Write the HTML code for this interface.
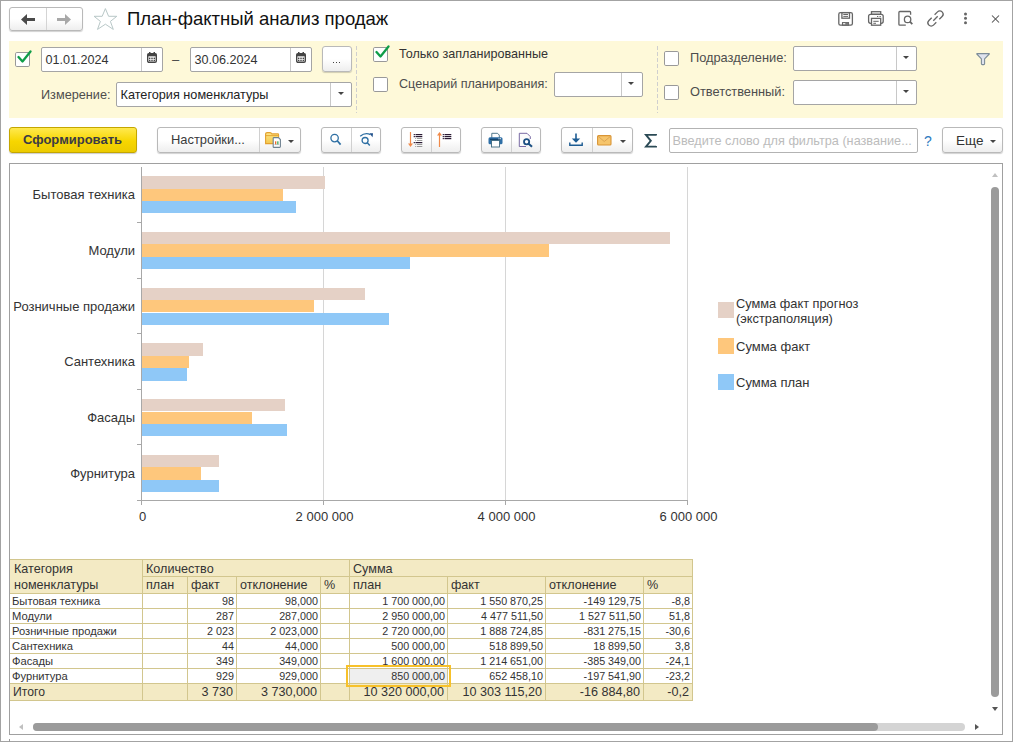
<!DOCTYPE html>
<html><head><meta charset="utf-8">
<style>
*{box-sizing:border-box;margin:0;padding:0}
html,body{width:1013px;height:742px;overflow:hidden;background:#fff}
body{position:relative;font-family:"Liberation Sans",sans-serif;color:#333;font-size:13px}
.a{position:absolute}
.t{position:absolute;white-space:nowrap;line-height:1}
#win{position:absolute;left:0;top:0;width:1013px;height:742px;border:1px solid #a3a3a3;border-width:1px 1px 1px 1px}
.btn{position:absolute;border:1px solid #b9b9b9;border-radius:3px;background:linear-gradient(#fff,#fff 50%,#eeeeee);box-shadow:0 1px 1px rgba(0,0,0,.18)}
.div{position:absolute;top:0;bottom:0;width:1px;background:#d0d0d0}
.inp{position:absolute;border:1px solid #a5a5a5;border-radius:2px;background:#fff}
.cb{position:absolute;width:15px;height:15px;border:1px solid #999;border-radius:1.8px;background:#fff}
.lbl{color:#4d4d4d}
.cal{width:9px;height:9px;border:1px solid #555;border-top-width:3px;background:repeating-linear-gradient(90deg,#555 0 1px,transparent 1px 2px)}
.dd{position:absolute;width:0;height:0;border-left:3px solid transparent;border-right:3px solid transparent;border-top:3px solid #444}
</style></head><body>
<div id="win"></div>

<!-- header -->
<div class="btn" style="left:9px;top:7px;width:74px;height:24px;">
  <div class="div" style="left:36px;background:#d4d4d4"></div>
</div>
<svg class="a" style="left:21px;top:14px" width="14" height="11" viewBox="0 0 14 11"><path d="M0 5.5 L6 0 L6 4 L14 4 L14 7 L6 7 L6 11 Z" fill="#4a4a4a"/></svg>
<svg class="a" style="left:57px;top:14px" width="14" height="11" viewBox="0 0 14 11"><path d="M14 5.5 L8 0 L8 4 L0 4 L0 7 L8 7 L8 11 Z" fill="#a8a8a8"/></svg>
<svg class="a" style="left:88px;top:4px" width="34" height="30" viewBox="0 0 34 30"><path d="M17.4 4.6 L20.6 12.3 L28.8 12.3 L22.4 17.4 L25.3 25.4 L17.4 20.2 L9.5 25.4 L12.4 17.4 L6.1 12.3 L14.2 12.3 Z" fill="none" stroke="#b4c4c4" stroke-width="0.95" stroke-linejoin="miter"/></svg>
<div class="t" style="left:127px;top:10.2px;font-size:18.5px;color:#111">План-фактный анализ продаж</div>

<!-- top-right icons -->
<svg class="a" style="left:830px;top:5px" width="175" height="27" viewBox="830 5 175 27" fill="none" stroke="#666" stroke-width="1.3">
 <rect x="838.8" y="12.6" width="13.6" height="12.6" rx="1.6"/>
 <rect x="841.9" y="12.6" width="7.6" height="5.6"/>
 <line x1="843.3" y1="14.5" x2="848" y2="14.5" stroke-width="1"/><line x1="843.3" y1="16.4" x2="848" y2="16.4" stroke-width="1"/>
 <rect x="842.5" y="22.6" width="6" height="2.6" stroke-width="1.1"/><rect x="845.3" y="22.6" width="3.2" height="2.6" fill="#777" stroke="none"/>
 <rect x="871.5" y="11.7" width="9.2" height="2.6"/>
 <rect x="868.6" y="14.3" width="14.6" height="9" rx="2"/>
 <rect x="871.5" y="18.4" width="9.2" height="6.8" fill="#fff"/>
 <line x1="873.3" y1="21.3" x2="878.7" y2="21.3" stroke-width="1"/><line x1="873.3" y1="23.3" x2="876" y2="23.3" stroke-width="1"/>
 <line x1="877" y1="16.5" x2="878.3" y2="16.5" stroke-width="1"/><line x1="879.5" y1="16.5" x2="880.8" y2="16.5" stroke-width="1"/>
 <path d="M905.8 25.2 H899.8 Q898.9 25.2 898.9 24.3 V12.4 Q898.9 11.5 899.8 11.5 H909.8 Q910.6 11.5 910.6 12.4 V14.8"/>
 <circle cx="907.6" cy="19.4" r="3.2"/><line x1="909.9" y1="21.7" x2="912.3" y2="24.1" stroke-width="1.8"/>
 <path d="M934.6 14.8 L937.5 11.9 A3.2 3.2 0 0 1 942.1 16.5 L939.3 19.3" stroke-width="1.3"/>
 <path d="M931.7 17.7 L928.9 20.5 A3.2 3.2 0 0 0 933.5 25.1 L936.3 22.3" stroke-width="1.3"/>
 <line x1="933.3" y1="20.7" x2="937.7" y2="16.3" stroke-width="1.3"/>
 <circle cx="965.5" cy="13.9" r="1.5" fill="#666" stroke="none"/><circle cx="965.5" cy="18.3" r="1.5" fill="#666" stroke="none"/><circle cx="965.5" cy="22.7" r="1.5" fill="#666" stroke="none"/>
 <line x1="992" y1="15.5" x2="999" y2="22.5" stroke-width="1.05" stroke="#505050"/><line x1="999" y1="15.5" x2="992" y2="22.5" stroke-width="1.05" stroke="#505050"/>
</svg>

<!-- filter panel -->
<div class="a" style="left:9px;top:41px;width:994px;height:77px;background:#fef9d9"></div>


<!-- filter panel content -->
<div class="cb" style="left:15px;top:52px"></div>
<svg class="a" style="left:17px;top:50px" width="15" height="14" viewBox="0 0 15 14"><path d="M1.5 7 L5.5 11.5 L13.5 1.5" fill="none" stroke="#0f9d48" stroke-width="2.3" stroke-linecap="round" stroke-linejoin="round"/></svg>
<div class="inp" style="left:41px;top:47px;width:122px;height:25px"><div class="div" style="left:99px;background:#c8c8c8"></div></div>
<div class="t" style="left:45.5px;top:53.7px;font-size:12.6px;color:#333">01.01.2024</div>
<svg class="a" style="left:147px;top:52px" width="10" height="11" viewBox="0 0 10 11"><rect x="0.7" y="1.7" width="8.6" height="8.6" rx="1.3" fill="none" stroke="#444" stroke-width="1.4"/><rect x="0.7" y="1.7" width="8.6" height="2.6" fill="#444"/><rect x="2" y="0" width="1.5" height="2" fill="#444"/><rect x="6.5" y="0" width="1.5" height="2" fill="#444"/><g fill="#444"><rect x="2" y="5.6" width="1.4" height="1.4"/><rect x="4.3" y="5.6" width="1.4" height="1.4"/><rect x="6.6" y="5.6" width="1.4" height="1.4"/><rect x="2" y="7.7" width="1.4" height="1.4"/><rect x="4.3" y="7.7" width="1.4" height="1.4"/><rect x="6.6" y="7.7" width="1.4" height="1.4"/></g></svg>
<div class="t" style="left:172px;top:53px;font-size:13px;color:#444">–</div>
<div class="inp" style="left:190px;top:47px;width:122px;height:25px"><div class="div" style="left:99px;background:#c8c8c8"></div></div>
<div class="t" style="left:194.5px;top:53.7px;font-size:12.6px;color:#333">30.06.2024</div>
<svg class="a" style="left:296px;top:52px" width="10" height="11" viewBox="0 0 10 11"><rect x="0.7" y="1.7" width="8.6" height="8.6" rx="1.3" fill="none" stroke="#444" stroke-width="1.4"/><rect x="0.7" y="1.7" width="8.6" height="2.6" fill="#444"/><rect x="2" y="0" width="1.5" height="2" fill="#444"/><rect x="6.5" y="0" width="1.5" height="2" fill="#444"/><g fill="#444"><rect x="2" y="5.6" width="1.4" height="1.4"/><rect x="4.3" y="5.6" width="1.4" height="1.4"/><rect x="6.6" y="5.6" width="1.4" height="1.4"/><rect x="2" y="7.7" width="1.4" height="1.4"/><rect x="4.3" y="7.7" width="1.4" height="1.4"/><rect x="6.6" y="7.7" width="1.4" height="1.4"/></g></svg>
<div class="btn" style="left:322px;top:46px;width:30px;height:26px"></div>
<div class="a" style="left:333px;top:62px;width:1.4px;height:1.4px;background:#444"></div><div class="a" style="left:335.8px;top:62px;width:1.4px;height:1.4px;background:#444"></div><div class="a" style="left:338.6px;top:62px;width:1.4px;height:1.4px;background:#444"></div>
<div class="t lbl" style="left:41px;top:88.8px;font-size:12.7px">Измерение:</div>
<div class="inp" style="left:116px;top:82px;width:236px;height:25px"><div class="div" style="left:213px;background:#c8c8c8"></div></div>
<div class="t" style="left:120.5px;top:88.8px;font-size:12.7px;color:#222">Категория номенклатуры</div>
<div class="dd" style="left:338px;top:92px"></div>

<div class="a" style="left:356px;top:46px;width:1px;height:67px;background-image:linear-gradient(#cfcfcf 66%,transparent 66%);background-size:1px 6px"></div>

<div class="cb" style="left:373px;top:47px"></div>
<svg class="a" style="left:375px;top:45px" width="15" height="14" viewBox="0 0 15 14"><path d="M1.5 7 L5.5 11.5 L13.5 1.5" fill="none" stroke="#0f9d48" stroke-width="2.3" stroke-linecap="round" stroke-linejoin="round"/></svg>
<div class="t" style="left:399px;top:48px;font-size:12.6px;color:#333">Только запланированные</div>
<div class="cb" style="left:373px;top:77px"></div>
<div class="t lbl" style="left:399px;top:78px;font-size:12.6px">Сценарий планирования:</div>
<div class="inp" style="left:554px;top:72px;width:89px;height:25px"><div class="div" style="left:66px;background:#c8c8c8"></div></div>
<div class="dd" style="left:628px;top:82px"></div>

<div class="a" style="left:657px;top:46px;width:1px;height:67px;background-image:linear-gradient(#cfcfcf 66%,transparent 66%);background-size:1px 6px"></div>

<div class="cb" style="left:664px;top:51px"></div>
<div class="t lbl" style="left:690px;top:52px;font-size:12.8px">Подразделение:</div>
<div class="inp" style="left:793px;top:46px;width:124px;height:25px"><div class="div" style="left:102px;background:#c8c8c8"></div></div>
<div class="dd" style="left:903px;top:56px"></div>
<div class="cb" style="left:664px;top:85px"></div>
<div class="t lbl" style="left:690px;top:86px;font-size:12.8px">Ответственный:</div>
<div class="inp" style="left:793px;top:80px;width:124px;height:25px"><div class="div" style="left:102px;background:#c8c8c8"></div></div>
<div class="dd" style="left:903px;top:90px"></div>
<svg class="a" style="left:975px;top:51px" width="16" height="16" viewBox="0 0 16 16"><path d="M2 2.6 H14.1 Q14.6 2.6 14.3 3 L9.6 7.8 V12.7 Q9.6 13.6 8.7 13.6 H7.3 Q6.4 13.6 6.4 12.7 V7.8 L1.8 3 Q1.5 2.6 2 2.6 Z" fill="#dfe3ee" stroke="#7d8d98" stroke-width="1.1" stroke-linejoin="round"/></svg>


<!-- toolbar -->
<div class="a" style="left:9px;top:127px;width:128px;height:26px;border:1px solid #c4a600;border-radius:3px;background:linear-gradient(#ffe94f,#f7d600 55%,#eccb00);box-shadow:0 1px 1px rgba(0,0,0,.2)"></div>
<div class="t" style="left:23px;top:133px;font-size:13px;font-weight:bold;color:#3b3b45">Сформировать</div>

<div class="btn" style="left:157px;top:127px;width:144px;height:26px"><div class="div" style="left:101px"></div></div>
<div class="t" style="left:171px;top:134px;font-size:12.9px;color:#3a3a3a">Настройки...</div>
<svg class="a" style="left:264px;top:131px" width="18" height="18" viewBox="0 0 18 18">
 <defs><linearGradient id="fg" x1="0" y1="0" x2="0" y2="1"><stop offset="0" stop-color="#fde88a"/><stop offset="1" stop-color="#f4c84e"/></linearGradient></defs>
 <path d="M1.6 12.6 V3.2 Q1.6 1.6 3.2 1.6 H6 Q7.3 1.6 7.8 2.9 H13.8 Q14.6 2.9 14.6 3.7 V12.6 Z" fill="url(#fg)" stroke="#e3a02e" stroke-width="1.1"/>
 <line x1="1.6" y1="4.6" x2="14.6" y2="4.6" stroke="#e3a02e" stroke-width="0.9"/>
 <path d="M9.2 7.3 Q9.2 6.6 9.9 6.6 H14.4 L16.4 8.6 V15.6 Q16.4 16.4 15.6 16.4 H9.9 Q9.2 16.4 9.2 15.7 Z" fill="#fff" stroke="#6f8290" stroke-width="1.1"/>
 <rect x="11" y="10.3" width="1.3" height="3.2" fill="#f26a2a"/><rect x="13.2" y="10.3" width="1.3" height="3.2" fill="#3daa5a"/>
 <line x1="10.4" y1="13.6" x2="15.2" y2="13.6" stroke="#9aa" stroke-width="0.6"/>
</svg>
<div class="dd" style="left:288px;top:140px;border-top-color:#444"></div>

<div class="btn" style="left:321px;top:127px;width:60px;height:26px"><div class="div" style="left:29px"></div></div>
<svg class="a" style="left:328px;top:131px" width="16" height="16" viewBox="0 0 16 16" fill="none" stroke="#2e6fa3"><circle cx="6.6" cy="7.1" r="3.7" stroke-width="1.3"/><line x1="9.3" y1="9.8" x2="12.6" y2="13.6" stroke-width="1.7"/></svg>
<svg class="a" style="left:358px;top:131px" width="17" height="16" viewBox="0 0 17 16" fill="none" stroke="#2e6fa3"><circle cx="7.1" cy="9.5" r="3" stroke-width="1.3"/><line x1="9.3" y1="11.8" x2="11.8" y2="14.4" stroke-width="1.5"/><path d="M2.2 5.3 Q7 1.2 12.5 3.6" stroke-width="1.3"/><path d="M11.6 2.2 L15 2.3 L14.5 6.3 Z" fill="#1f4f8a" stroke="none"/></svg>

<div class="btn" style="left:401px;top:127px;width:60px;height:26px"><div class="div" style="left:29px"></div></div>
<svg class="a" style="left:407px;top:131px" width="18" height="18" viewBox="0 0 18 18">
 <line x1="3.5" y1="1" x2="3.5" y2="14" stroke="#f08a4a" stroke-width="1.2"/><path d="M1 12.5 L6 12.5 L3.5 16 Z" fill="#f08a4a"/>
 <g fill="#2a1a33"><rect x="6.7" y="3" width="1.2" height="1.2"/><rect x="8.5" y="3" width="6.8" height="1.2"/><rect x="6.7" y="5" width="1.2" height="1.2"/><rect x="8.5" y="5" width="6.8" height="1.2"/><rect x="6.7" y="11" width="1.2" height="1.2"/><rect x="8.5" y="11" width="6.8" height="1.2"/></g>
 <g fill="#9a9a9a"><rect x="8.2" y="7" width="1" height="1"/><rect x="10" y="7" width="5.3" height="1"/><rect x="8.2" y="9" width="1" height="1"/><rect x="10" y="9" width="5.3" height="1"/><rect x="8.2" y="13" width="1" height="1"/><rect x="10" y="13" width="5.3" height="1"/><rect x="8.2" y="15" width="1" height="1"/><rect x="10" y="15" width="5.3" height="1"/></g>
</svg>
<svg class="a" style="left:436px;top:131px" width="18" height="18" viewBox="0 0 18 18">
 <line x1="3.5" y1="3" x2="3.5" y2="16" stroke="#f08a4a" stroke-width="1.2"/><path d="M1 4.5 L6 4.5 L3.5 1 Z" fill="#f08a4a"/>
 <g fill="#2a1a33"><rect x="6.7" y="3" width="1.2" height="1.2"/><rect x="8.5" y="3" width="6.8" height="1.2"/><rect x="6.7" y="5" width="1.2" height="1.2"/><rect x="8.5" y="5" width="6.8" height="1.2"/><rect x="6.7" y="7" width="1.2" height="1.2"/><rect x="8.5" y="7" width="6.8" height="1.2"/></g>
</svg>

<div class="btn" style="left:481px;top:127px;width:60px;height:26px"><div class="div" style="left:29px"></div></div>
<svg class="a" style="left:488px;top:132px" width="16" height="16" viewBox="0 0 16 16">
 <path d="M3.8 6 V1.3 H9.5 L11.3 3.1 V6" fill="#fff" stroke="#3f6a80" stroke-width="0.9"/>
 <rect x="0.5" y="5.3" width="14" height="7" rx="1.5" fill="#2f6fa6"/><rect x="2" y="6.8" width="11" height="1" fill="#0f3a5e"/>
 <rect x="10.5" y="6.3" width="1" height="1" fill="#fff"/><rect x="12" y="6.3" width="1" height="1" fill="#fff"/>
 <rect x="3.5" y="8.5" width="8" height="6.5" fill="#fff" stroke="#3f6a80" stroke-width="0.9"/>
</svg>
<svg class="a" style="left:518px;top:132px" width="16" height="16" viewBox="0 0 16 16">
 <path d="M8 14.5 H1.3 V1.3 H9 L12.3 4.6 V7" fill="#fbfbfb" stroke="#6a5a9a" stroke-width="0.9"/>
 <circle cx="8.6" cy="9.7" r="2.6" fill="#fff" stroke="#1b4f82" stroke-width="1.8"/><line x1="10.6" y1="11.7" x2="14" y2="14.8" stroke="#1b4f82" stroke-width="2"/>
</svg>

<div class="btn" style="left:561px;top:127px;width:72px;height:26px"><div class="div" style="left:30px"></div></div>
<svg class="a" style="left:568px;top:133px" width="16" height="14" viewBox="0 0 16 14">
 <line x1="8" y1="0.5" x2="8" y2="8" stroke="#1d5c93" stroke-width="1.6"/><path d="M3.8 5.5 L12.2 5.5 L8 9.8 Z" fill="#1d5c93"/><path d="M1.8 9.5 V12.2 H14.2 V9.5" fill="none" stroke="#1d5c93" stroke-width="1.4"/>
</svg>
<svg class="a" style="left:597px;top:135px" width="15" height="11" viewBox="0 0 15 11">
 <rect x="0.6" y="0.6" width="13.4" height="9.4" rx="1" fill="#f6c56c" stroke="#d99535" stroke-width="1.1"/><path d="M1 1.2 L7.3 6.5 L13.6 1.2" fill="none" stroke="#d9a050" stroke-width="0.9"/>
</svg>
<div class="dd" style="left:620px;top:140px"></div>

<svg class="a" style="left:644px;top:133px" width="14" height="15" viewBox="0 0 14 15"><path d="M12 2.6 V1.9 H2 L6.8 7.8 L2 13.6 H12 V12.9" fill="none" stroke="#2b4a55" stroke-width="1.9" stroke-linejoin="miter"/></svg>

<div class="inp" style="left:669px;top:128px;width:249px;height:25px;border-color:#b3b3b3"></div>
<div class="t" style="left:672.5px;top:134.5px;font-size:12.7px;color:#bcbcbc">Введите слово для фильтра (название...</div>
<div class="t" style="left:924px;top:133.5px;font-size:14px;color:#2d7ac0">?</div>
<div class="btn" style="left:942px;top:127px;width:61px;height:26px"></div>
<div class="t" style="left:956px;top:134px;font-size:13.5px;color:#333">Еще</div>
<div class="dd" style="left:990px;top:140px"></div>

<!-- spreadsheet frame -->
<div class="a" style="left:9px;top:163px;width:994px;height:572px;border:1px solid #a0a0a0"></div>

<!-- chart -->
<div class="a" style="left:323px;top:167px;width:1px;height:333px;background:#d6d6d6"></div>
<div class="a" style="left:505px;top:167px;width:1px;height:333px;background:#d6d6d6"></div>
<div class="a" style="left:687px;top:167px;width:1px;height:333px;background:#d6d6d6"></div>
<div class="a" style="left:141px;top:167px;width:1px;height:334px;background:#a8a8a8"></div>
<div class="a" style="left:141px;top:500px;width:547px;height:1px;background:#a8a8a8"></div>
<div class="a" style="left:137px;top:222px;width:4px;height:1px;background:#a8a8a8"></div>
<div class="a" style="left:137px;top:278px;width:4px;height:1px;background:#a8a8a8"></div>
<div class="a" style="left:137px;top:333px;width:4px;height:1px;background:#a8a8a8"></div>
<div class="a" style="left:137px;top:389px;width:4px;height:1px;background:#a8a8a8"></div>
<div class="a" style="left:137px;top:444px;width:4px;height:1px;background:#a8a8a8"></div>
<div class="a" style="left:137px;top:500px;width:4px;height:1px;background:#a8a8a8"></div>
<div class="a" style="left:141px;top:500px;width:1px;height:5px;background:#a8a8a8"></div>
<div class="a" style="left:323px;top:500px;width:1px;height:5px;background:#a8a8a8"></div>
<div class="a" style="left:505px;top:500px;width:1px;height:5px;background:#a8a8a8"></div>
<div class="a" style="left:687px;top:500px;width:1px;height:5px;background:#a8a8a8"></div>
<div class="a" style="left:142px;top:176.3px;width:183.0px;height:12.4px;background:#e5d1c6"></div>
<div class="a" style="left:142px;top:188.7px;width:140.7px;height:12.4px;background:#fec77c"></div>
<div class="a" style="left:142px;top:201.1px;width:154.3px;height:12.4px;background:#8fc8f7"></div>
<div class="t" style="right:878px;top:188.1px;font-size:13px;color:#333">Бытовая техника</div>
<div class="a" style="left:142px;top:232.0px;width:527.9px;height:12.4px;background:#e5d1c6"></div>
<div class="a" style="left:142px;top:244.4px;width:407.1px;height:12.4px;background:#fec77c"></div>
<div class="a" style="left:142px;top:256.8px;width:268.0px;height:12.4px;background:#8fc8f7"></div>
<div class="t" style="right:878px;top:243.8px;font-size:13px;color:#333">Модули</div>
<div class="a" style="left:142px;top:287.7px;width:222.8px;height:12.4px;background:#e5d1c6"></div>
<div class="a" style="left:142px;top:300.1px;width:171.5px;height:12.4px;background:#fec77c"></div>
<div class="a" style="left:142px;top:312.5px;width:247.1px;height:12.4px;background:#8fc8f7"></div>
<div class="t" style="right:878px;top:299.5px;font-size:13px;color:#333">Розничные продажи</div>
<div class="a" style="left:142px;top:343.4px;width:61.0px;height:12.4px;background:#e5d1c6"></div>
<div class="a" style="left:142px;top:355.8px;width:46.8px;height:12.4px;background:#fec77c"></div>
<div class="a" style="left:142px;top:368.2px;width:45.1px;height:12.4px;background:#8fc8f7"></div>
<div class="t" style="right:878px;top:355.2px;font-size:13px;color:#333">Сантехника</div>
<div class="a" style="left:142px;top:399.1px;width:143.0px;height:12.4px;background:#e5d1c6"></div>
<div class="a" style="left:142px;top:411.5px;width:110.1px;height:12.4px;background:#fec77c"></div>
<div class="a" style="left:142px;top:423.9px;width:145.2px;height:12.4px;background:#8fc8f7"></div>
<div class="t" style="right:878px;top:410.9px;font-size:13px;color:#333">Фасады</div>
<div class="a" style="left:142px;top:454.8px;width:77.0px;height:12.4px;background:#e5d1c6"></div>
<div class="a" style="left:142px;top:467.2px;width:59.0px;height:12.4px;background:#fec77c"></div>
<div class="a" style="left:142px;top:479.6px;width:76.9px;height:12.4px;background:#8fc8f7"></div>
<div class="t" style="right:878px;top:466.6px;font-size:13px;color:#333">Фурнитура</div>
<div class="t" style="left:42px;width:201px;text-align:center;top:510.3px;font-size:13px;color:#333">0</div>
<div class="t" style="left:224px;width:201px;text-align:center;top:510.3px;font-size:13px;color:#333">2 000 000</div>
<div class="t" style="left:406px;width:201px;text-align:center;top:510.3px;font-size:13px;color:#333">4 000 000</div>
<div class="t" style="left:588px;width:201px;text-align:center;top:510.3px;font-size:13px;color:#333">6 000 000</div>
<div class="a" style="left:718px;top:302px;width:16px;height:16px;background:#e5d1c6"></div>
<div class="a" style="left:718px;top:338px;width:16px;height:16px;background:#fec77c"></div>
<div class="a" style="left:718px;top:374px;width:16px;height:16px;background:#8fc8f7"></div>
<div class="t" style="left:736px;top:295.5px;font-size:12.8px;line-height:15.6px;color:#333">Сумма факт прогноз<br>(экстраполяция)</div>
<div class="t" style="left:736px;top:340px;font-size:13px;color:#333">Сумма факт</div>
<div class="t" style="left:736px;top:376px;font-size:13px;color:#333">Сумма план</div>
<!-- table -->
<div class="a" style="left:10px;top:559px;width:683px;height:35px;background:#f3eac4"></div>
<div class="a" style="left:10px;top:683px;width:683px;height:18px;background:#f3eac4"></div>
<div class="a" style="left:10px;top:559px;width:683px;height:1px;background:#d2c68e"></div>
<div class="a" style="left:142px;top:576px;width:551px;height:1px;background:#d2c68e"></div>
<div class="a" style="left:10px;top:593px;width:683px;height:1px;background:#d2c68e"></div>
<div class="a" style="left:10px;top:608px;width:683px;height:1px;background:#d2c68e"></div>
<div class="a" style="left:10px;top:623px;width:683px;height:1px;background:#d2c68e"></div>
<div class="a" style="left:10px;top:638px;width:683px;height:1px;background:#d2c68e"></div>
<div class="a" style="left:10px;top:653px;width:683px;height:1px;background:#d2c68e"></div>
<div class="a" style="left:10px;top:668px;width:683px;height:1px;background:#d2c68e"></div>
<div class="a" style="left:10px;top:683px;width:683px;height:1px;background:#d2c68e"></div>
<div class="a" style="left:10px;top:700px;width:683px;height:1px;background:#d2c68e"></div>
<div class="a" style="left:142px;top:559px;width:1px;height:142px;background:#d2c68e"></div>
<div class="a" style="left:187px;top:576px;width:1px;height:125px;background:#d2c68e"></div>
<div class="a" style="left:236px;top:576px;width:1px;height:125px;background:#d2c68e"></div>
<div class="a" style="left:320px;top:576px;width:1px;height:125px;background:#d2c68e"></div>
<div class="a" style="left:349px;top:559px;width:1px;height:142px;background:#d2c68e"></div>
<div class="a" style="left:447px;top:576px;width:1px;height:125px;background:#d2c68e"></div>
<div class="a" style="left:545px;top:576px;width:1px;height:125px;background:#d2c68e"></div>
<div class="a" style="left:643px;top:576px;width:1px;height:125px;background:#d2c68e"></div>
<div class="a" style="left:692px;top:559px;width:1px;height:142px;background:#d2c68e"></div>
<div class="t" style="left:14px;top:563px;font-size:12.6px;color:#333;">Категория</div>
<div class="t" style="left:14px;top:579px;font-size:12.6px;color:#333;">номенклатуры</div>
<div class="t" style="left:146px;top:563px;font-size:12.6px;color:#333;">Количество</div>
<div class="t" style="left:353px;top:563px;font-size:12.6px;color:#333;">Сумма</div>
<div class="t" style="left:146px;top:579px;font-size:12.6px;color:#333;">план</div>
<div class="t" style="left:191px;top:579px;font-size:12.6px;color:#333;">факт</div>
<div class="t" style="left:240px;top:579px;font-size:12.6px;color:#333;">отклонение</div>
<div class="t" style="left:324px;top:579px;font-size:12.6px;color:#333;">%</div>
<div class="t" style="left:353px;top:579px;font-size:12.6px;color:#333;">план</div>
<div class="t" style="left:451px;top:579px;font-size:12.6px;color:#333;">факт</div>
<div class="t" style="left:549px;top:579px;font-size:12.6px;color:#333;">отклонение</div>
<div class="t" style="left:647px;top:579px;font-size:12.6px;color:#333;">%</div>
<div class="a" style="left:350px;top:669px;width:97px;height:14px;background:#efefef"></div>
<div class="t" style="left:12px;top:596px;font-size:11.2px;color:#333">Бытовая техника</div>
<div class="t" style="right:779px;top:596px;font-size:10.75px;color:#333">98</div>
<div class="t" style="right:695px;top:596px;font-size:10.75px;color:#333">98,000</div>
<div class="t" style="right:568px;top:596px;font-size:10.75px;color:#333">1 700 000,00</div>
<div class="t" style="right:470px;top:596px;font-size:10.75px;color:#333">1 550 870,25</div>
<div class="t" style="right:372px;top:596px;font-size:10.75px;color:#333">-149 129,75</div>
<div class="t" style="right:323px;top:596px;font-size:10.75px;color:#333">-8,8</div>
<div class="t" style="left:12px;top:611px;font-size:11.2px;color:#333">Модули</div>
<div class="t" style="right:779px;top:611px;font-size:10.75px;color:#333">287</div>
<div class="t" style="right:695px;top:611px;font-size:10.75px;color:#333">287,000</div>
<div class="t" style="right:568px;top:611px;font-size:10.75px;color:#333">2 950 000,00</div>
<div class="t" style="right:470px;top:611px;font-size:10.75px;color:#333">4 477 511,50</div>
<div class="t" style="right:372px;top:611px;font-size:10.75px;color:#333">1 527 511,50</div>
<div class="t" style="right:323px;top:611px;font-size:10.75px;color:#333">51,8</div>
<div class="t" style="left:12px;top:626px;font-size:11.2px;color:#333">Розничные продажи</div>
<div class="t" style="right:779px;top:626px;font-size:10.75px;color:#333">2 023</div>
<div class="t" style="right:695px;top:626px;font-size:10.75px;color:#333">2 023,000</div>
<div class="t" style="right:568px;top:626px;font-size:10.75px;color:#333">2 720 000,00</div>
<div class="t" style="right:470px;top:626px;font-size:10.75px;color:#333">1 888 724,85</div>
<div class="t" style="right:372px;top:626px;font-size:10.75px;color:#333">-831 275,15</div>
<div class="t" style="right:323px;top:626px;font-size:10.75px;color:#333">-30,6</div>
<div class="t" style="left:12px;top:641px;font-size:11.2px;color:#333">Сантехника</div>
<div class="t" style="right:779px;top:641px;font-size:10.75px;color:#333">44</div>
<div class="t" style="right:695px;top:641px;font-size:10.75px;color:#333">44,000</div>
<div class="t" style="right:568px;top:641px;font-size:10.75px;color:#333">500 000,00</div>
<div class="t" style="right:470px;top:641px;font-size:10.75px;color:#333">518 899,50</div>
<div class="t" style="right:372px;top:641px;font-size:10.75px;color:#333">18 899,50</div>
<div class="t" style="right:323px;top:641px;font-size:10.75px;color:#333">3,8</div>
<div class="t" style="left:12px;top:656px;font-size:11.2px;color:#333">Фасады</div>
<div class="t" style="right:779px;top:656px;font-size:10.75px;color:#333">349</div>
<div class="t" style="right:695px;top:656px;font-size:10.75px;color:#333">349,000</div>
<div class="t" style="right:568px;top:656px;font-size:10.75px;color:#333">1 600 000,00</div>
<div class="t" style="right:470px;top:656px;font-size:10.75px;color:#333">1 214 651,00</div>
<div class="t" style="right:372px;top:656px;font-size:10.75px;color:#333">-385 349,00</div>
<div class="t" style="right:323px;top:656px;font-size:10.75px;color:#333">-24,1</div>
<div class="t" style="left:12px;top:671px;font-size:11.2px;color:#333">Фурнитура</div>
<div class="t" style="right:779px;top:671px;font-size:10.75px;color:#333">929</div>
<div class="t" style="right:695px;top:671px;font-size:10.75px;color:#333">929,000</div>
<div class="t" style="right:568px;top:671px;font-size:10.75px;color:#333">850 000,00</div>
<div class="t" style="right:470px;top:671px;font-size:10.75px;color:#333">652 458,10</div>
<div class="t" style="right:372px;top:671px;font-size:10.75px;color:#333">-197 541,90</div>
<div class="t" style="right:323px;top:671px;font-size:10.75px;color:#333">-23,2</div>
<div class="t" style="left:13px;top:686px;font-size:12.2px;color:#333;">Итого</div>
<div class="t" style="right:780px;top:686px;font-size:12.6px;color:#333;">3 730</div>
<div class="t" style="right:696px;top:686px;font-size:12.6px;color:#333;">3 730,000</div>
<div class="t" style="right:569px;top:686px;font-size:12.6px;color:#333;">10 320 000,00</div>
<div class="t" style="right:471px;top:686px;font-size:12.6px;color:#333;">10 303 115,20</div>
<div class="t" style="right:373px;top:686px;font-size:12.6px;color:#333;">-16 884,80</div>
<div class="t" style="right:324px;top:686px;font-size:12.6px;color:#333;">-0,2</div>
<div class="a" style="left:346px;top:665px;width:105px;height:22px;border:2px solid #f7c12a"></div>
<svg class="a" style="left:992px;top:173px" width="6" height="4" viewBox="0 0 6 4"><path d="M0 4 L3 0 L6 4 Z" fill="#c0c0c0"/></svg>
<div class="a" style="left:991px;top:187px;width:8px;height:510px;border-radius:4px;background:#9b9b9b"></div>
<svg class="a" style="left:992px;top:707px" width="6" height="4" viewBox="0 0 6 4"><path d="M0 0 L6 0 L3 4 Z" fill="#555"/></svg>
<svg class="a" style="left:19px;top:724px" width="4" height="6" viewBox="0 0 4 6"><path d="M4 0 L4 6 L0 3 Z" fill="#c0c0c0"/></svg>
<div class="a" style="left:33px;top:723px;width:932px;height:8px;border-radius:4px;background:#d4d4d4"></div>
<div class="a" style="left:33px;top:723px;width:845px;height:8px;border-radius:4px;background:#9b9b9b"></div>
<svg class="a" style="left:975px;top:724px" width="4" height="6" viewBox="0 0 4 6"><path d="M0 0 L0 6 L4 3 Z" fill="#555"/></svg>
<div class="a" style="left:9px;top:739px;width:1px;height:3px;background:#9a9a9a"></div>
</body></html>
